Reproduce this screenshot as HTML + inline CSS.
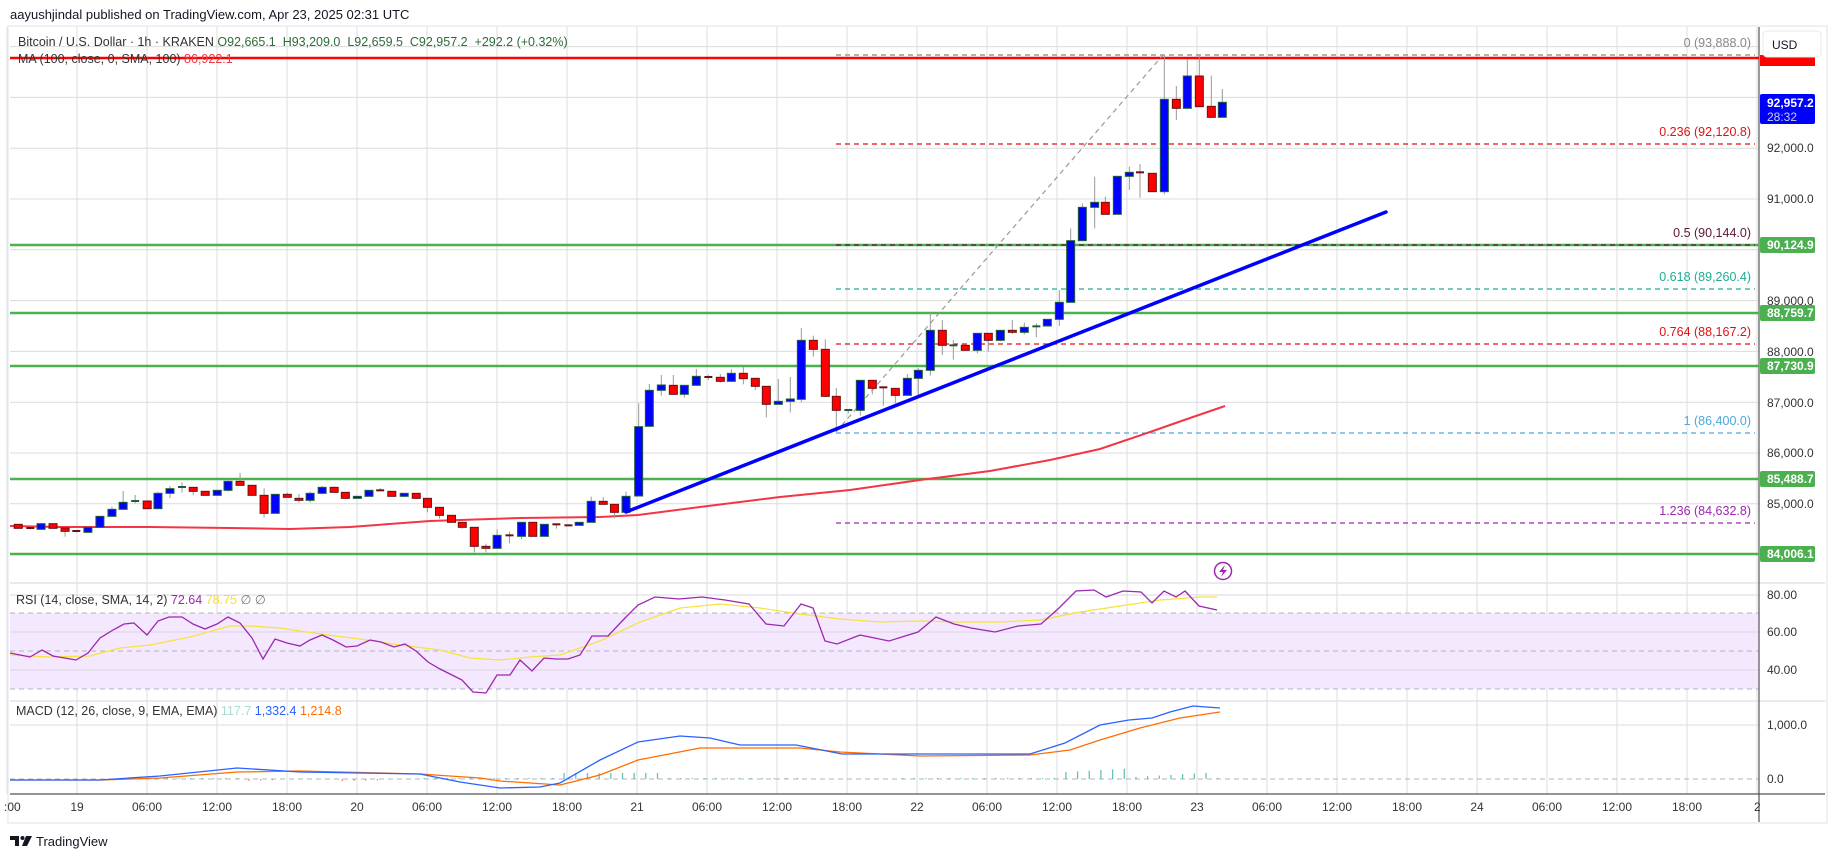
<!DOCTYPE html>
<html><head><meta charset="utf-8"><style>
html,body{margin:0;padding:0;background:#fff;width:1835px;height:857px;overflow:hidden;font-family:"Liberation Sans",sans-serif;}
svg{position:absolute;left:0;top:0}
</style></head><body>
<svg id="s" width="1835" height="857" xmlns="http://www.w3.org/2000/svg" font-family="Liberation Sans, sans-serif"></svg>
<script>
const S=document.getElementById('s');let h='';
const L=10,R=1759,T=27,B=794;
// frame
h+=`<rect x="8" y="26" width="1819" height="797" fill="#fff" stroke="#eef0f4" stroke-width="2"/>`;
h+=`<text x="10" y="19" font-size="13" fill="#131722">aayushjindal published on TradingView.com, Apr 23, 2025 02:31 UTC</text>`;
// vertical grid
for(let x=7;x<R;x+=70){h+=`<line x1="${x}" y1="${T}" x2="${x}" y2="${B}" stroke="#dcdcdc"/>`;}
// horizontal grid main
const yp=p=>453-(p-86000)*0.0508;
for(let p=84000;p<=94000;p+=1000){const y=yp(p);if(y>T&&y<583)h+=`<line x1="${L}" y1="${y}" x2="${R}" y2="${y}" stroke="#dcdcdc"/>`;}
// pane separators
h+=`<line x1="${L}" y1="583" x2="1825" y2="583" stroke="#e0e3eb" stroke-width="1.5"/>`;
h+=`<line x1="${L}" y1="701" x2="1825" y2="701" stroke="#e0e3eb" stroke-width="1.5"/>`;
// RSI pane
h+=`<rect x="${L}" y="613" width="${R-L}" height="76" fill="#f3e8fd"/>`;
[595,632,670].forEach(y=>h+=`<line x1="${L}" y1="${y}" x2="${R}" y2="${y}" stroke="#dcd4e4"/>`);
[613,651,689].forEach(y=>h+=`<line x1="${L}" y1="${y}" x2="${R}" y2="${y}" stroke="#b2b5be" stroke-dasharray="5,4"/>`);
// MACD pane
h+=`<line x1="${L}" y1="725" x2="${R}" y2="725" stroke="#dcdcdc"/>`;
h+=`<line x1="${L}" y1="779" x2="${R}" y2="779" stroke="#b2b5be" stroke-dasharray="5,4"/>`;
// axes
h+=`<line x1="${R}" y1="${T}" x2="${R}" y2="822" stroke="#555" stroke-width="1.2"/>`;
h+=`<line x1="${L}" y1="${B}" x2="1825" y2="${B}" stroke="#555" stroke-width="1.2"/>`;
// green lines
[[245,'90,124.9'],[313,'88,759.7'],[366,'87,730.9'],[479,'85,488.7'],[554,'84,006.1']].forEach(a=>{h+=`<line x1="${L}" y1="${a[0]}" x2="${R}" y2="${a[0]}" stroke="#4caf50" stroke-width="2.5"/>`;});
// red line
h+=`<line x1="${L}" y1="58" x2="${R}" y2="58" stroke="#ff0000" stroke-width="2.5"/>`;
// fib levels
const fib=[[55,'#888','0 (93,888.0)'],[144,'#e01010','0.236 (92,120.8)'],[245,'#5d1638','0.5 (90,144.0)'],[289,'#22ab94','0.618 (89,260.4)'],[344,'#e01010','0.764 (88,167.2)'],[433,'#4ea7dc','1 (86,400.0)'],[523,'#9c27b0','1.236 (84,632.8)']];
fib.forEach(f=>{h+=`<line x1="836" y1="${f[0]}" x2="1755" y2="${f[0]}" stroke="${f[1]}" stroke-width="1.2" stroke-dasharray="5,4"/>`;h+=`<text x="1751" y="${f[0]-8}" font-size="12.5" fill="${f[1]}" text-anchor="end">${f[2]}</text>`;});
h+=`<line x1="836" y1="432" x2="1163" y2="55" stroke="#999" stroke-width="1.2" stroke-dasharray="5,4"/>`;
// MA
h+=`<polyline fill="none" stroke="#f23645" stroke-width="2" points="10,526 60,527 150,527 230,528 290,529 350,527 430,521 520,518 600,517 638,515 700,507 780,497 850,490 920,480 990,471 1050,460 1100,449 1150,432 1190,418 1225,406"/>`;
// candles
let C=[];
const z6=[[44,283,295,'r'],[73,294,298,'r'],[99,281,298,'b'],[128,281,295,'r'],[157,294,304,'r',294,320],[184,303,307,'r'],[212,292,307,'b'],[241,259,292,'b'],[270,238,259,'b',230,259],[297,217,238,'b',183,238],[326,213,217,'g',195,220],[355,213,236,'r'],[381,190,236,'b',185,236],[410,176,190,'b',168,204],[439,171,173,'g',157,188],[466,172,184,'r',172,196],[495,184,196,'r'],[524,181,196,'b'],[550,154,181,'b',152,185],[579,154,166,'r',129,166],[608,166,196,'r'],[637,196,250,'r',175,263],[664,193,250,'b'],[693,193,202,'r',188,202],[721,205,211,'r',192,218],[748,190,211,'b',185,218],[777,172,190,'b',168,193],[806,172,187,'r'],[833,187,205,'r'],[862,199,205,'b'],[890,181,199,'b'],[917,181,184,'r',174,184],[945,184,199,'r'],[975,190,199,'b',190,202],[1004,190,205,'r'],[1031,205,232,'r',205,247],[1060,232,256,'r',232,266],[1089,256,277,'r'],[1115,277,292,'r',277,296],[1144,292,349,'r',292,367],[1172,349,355,'r',341,367],[1199,316,355,'b',298,355],[1229,316,316,'r',305,340],[1258,277,319,'b',277,327],[1285,277,319,'r'],[1313,283,319,'b'],[1342,283,286,'r',280,296],[1371,286,286,'r'],[1397,277,286,'b'],[1426,214,277,'b',200,277],[1455,214,223,'r',201,223],[1482,223,247,'r',223,265],[1510,199,247,'b',185,247]];
z6.forEach(c=>C.push([c[0]/2.412,430+c[1]/3,430+c[2]/3,c[3],430+(c[4]??c[1])/3,430+(c[5]??c[2])/3]));
const z7=[[116,380,588,'b',310,588],[148,271,379,'b',252,379],[184,255,271,'b',225,287],[220,256,283,'r',225,283],[253,256,283,'b',256,293],[289,229,256,'b',207,256],[325,231,231,'r',224,240],[361,232,244,'r',222,248],[394,220,244,'b',207,244],[430,220,236,'r',200,253],[466,235,259,'r',235,270],[499,259,313,'r',259,352],[535,304,313,'b',237,313],[571,297,304,'b',231,337],[604,121,298,'b',84,307],[640,121,148,'r',107,170],[676,148,289,'r',118,292],[709,289,331,'r',264,395],[745,330,330,'g',330,340],[781,241,331,'b',241,347],[817,241,265,'r',241,283],[850,262,262,'r',262,317],[886,265,286,'r',265,310],[922,235,286,'b',222,286],[955,211,235,'b',205,290],[991,91,211,'b',37,227],[1027,91,136,'r',60,165],[1060,136,136,'g',120,179],[1096,136,151,'r',136,151],[1132,100,151,'b',100,160],[1165,100,121,'r',100,155],[1201,91,121,'b',91,124],[1237,91,97,'r',60,102],[1273,82,97,'b',68,103],[1309,79,79,'g',70,112]];
z7.forEach(c=>C.push([600+c[0]/3,300+c[1]/3,300+c[2]/3,c[3],300+c[4]/3,300+c[5]/3]));
const z8=[[142,838,858,'b'],[178,787,838,'b',750,858],[212,602,787,'b',565,787],[247,502,602,'b',490,602],[284,487,502,'b',410,565],[316,487,523,'r',470,523],[352,409,523,'b'],[388,397,409,'b',380,450],[420,397,397,'r',372,473],[457,400,455,'r'],[493,178,455,'b',45,463],[529,178,205,'r',138,240],[562,108,205,'b',57,205],[598,108,200,'r',45,200],[634,199,232,'r',107,232],[667,187,232,'b',147,232]];
z8.forEach(c=>C.push([1000+c[0]/3,40+c[1]/3,40+c[2]/3,c[3],40+(c[4]??c[1])/3,40+(c[5]??c[2])/3]));
C.forEach(c=>{const [x,t,b,col,wt,wb]=c;
 h+=`<line x1="${x}" y1="${wt}" x2="${x}" y2="${wb}" stroke="#9a9a9a" stroke-width="1"/>`;
 let fill=col=='b'?'#0000ff':col=='r'?'#ff0000':'#1e5e3a';let st=col=='r'?'#6b1111':'#1e5e3a';
 if(b-t<1.5){h+=`<rect x="${x-4}" y="${t-1}" width="8" height="2" fill="${col=='g'?'#1e5e3a':'#6b1111'}"/>`;}
 else h+=`<rect x="${x-4}" y="${t}" width="8" height="${b-t}" fill="${fill}" stroke="${st}" stroke-width="1"/>`;});
// trendline
h+=`<line x1="626" y1="512" x2="1386" y2="212" stroke="#0000ff" stroke-width="3.5" stroke-linecap="round"/>`;
// legend
h+=`<text x="18" y="46" font-size="12.5" fill="#333">Bitcoin / U.S. Dollar · 1h · KRAKEN <tspan fill="#2e6b3a">O92,665.1 &#160;H93,209.0 &#160;L92,659.5 &#160;C92,957.2 &#160;+292.2 (+0.32%)</tspan></text>`;
h+=`<text x="18" y="63" font-size="12.5" fill="#333">MA (100, close, 0, SMA, 100) <tspan fill="#f23645">86,922.1</tspan></text>`;
// price axis labels
[[148,'92,000.0'],[199,'91,000.0'],[301,'89,000.0'],[352,'88,000.0'],[403,'87,000.0'],[453,'86,000.0'],[504,'85,000.0']].forEach(a=>h+=`<text x="1767" y="${a[0]+4}" font-size="12" fill="#333">${a[1]}</text>`);
[[245,'90,124.9'],[313,'88,759.7'],[366,'87,730.9'],[479,'85,488.7'],[554,'84,006.1']].forEach(a=>{h+=`<rect x="1760" y="${a[0]-8}" width="55" height="16" rx="2" fill="#4caf50"/><text x="1767" y="${a[0]+4}" font-size="12" font-weight="bold" fill="#fff">${a[1]}</text>`;});
h+=`<rect x="1760" y="55" width="55" height="11" fill="#ff0000"/>`;
h+=`<rect x="1763" y="31" width="58" height="26" rx="4" fill="#fff" stroke="#e8e8e8"/><text x="1772" y="49" font-size="12" fill="#131722">USD</text>`;
h+=`<rect x="1760" y="94" width="55" height="30" rx="2" fill="#0000ff"/><text x="1767" y="107" font-size="12" font-weight="bold" fill="#fff">92,957.2</text><text x="1767" y="121" font-size="12" fill="#ccd">28:32</text>`;
// RSI / MACD axis
[[595,'80.00'],[632,'60.00'],[670,'40.00'],[725,'1,000.0'],[779,'0.0']].forEach(a=>h+=`<text x="1767" y="${a[0]+4}" font-size="12" fill="#333">${a[1]}</text>`);
// time labels
const tl=['19','06:00','12:00','18:00','20','06:00','12:00','18:00','21','06:00','12:00','18:00','22','06:00','12:00','18:00','23','06:00','12:00','18:00','24','06:00','12:00','18:00'];
h+=`<text x="4" y="811" font-size="12" fill="#333">:00</text>`;
tl.forEach((t,i)=>{h+=`<text x="${77+70*i}" y="811" font-size="12" fill="#333" text-anchor="middle" ${t.length==2?'font-weight="normal"':''}>${t}</text>`;});
h+=`<text x="1754" y="811" font-size="12" fill="#333">2</text>`;
// RSI
h+=`<text x="16" y="604" font-size="12.5" fill="#333">RSI (14, close, SMA, 14, 2) <tspan fill="#9c27b0">72.64</tspan> <tspan fill="#f5e020">78.75</tspan> <tspan fill="#777">∅ ∅</tspan></text>`;
h+=`<polyline fill="none" stroke="#f7e33a" stroke-width="1.2" points="10,655 50,657 90,656 120,648 150,645 190,637 230,626 250,626 280,628 320,634 360,639 400,645 440,650 470,658 500,660 530,657 560,655 600,641 640,622 680,608 720,604 760,608 800,614 840,619 880,622 920,621 960,622 1000,622 1040,620 1080,612 1120,606 1160,600 1200,597 1217,597"/>`;
h+=`<polyline fill="none" stroke="#9c27b0" stroke-width="1.3" points="10,653 30,657 42,650 53,656 76,660 88,653 100,638 113,630 124,624 134,623 147,635 158,621 169,617 182,617 193,624 205,629 217,624 228,617 240,623 252,638 263,659 275,639 287,643 300,646 310,640 322,635 333,640 346,647 357,646 370,640 381,642 394,647 405,644 416,651 428,662 440,669 450,674 462,680 473,692 486,693 497,675 510,675 520,660 532,671 544,658 556,659 568,659 580,655 592,636 608,636 625,618 638,605 655,597 679,599 702,597 725,600 749,604 766,624 784,626 801,604 813,608 825,641 837,644 860,635 889,641 918,632 936,617 954,624 971,628 995,632 1018,626 1041,624 1059,608 1076,591 1094,590 1106,597 1123,591 1141,592 1152,603 1164,591 1176,597 1185,591 1199,606 1217,610"/>`;
// MACD
h+=`<text x="16" y="715" font-size="12.5" fill="#333">MACD (12, 26, close, 9, EMA, EMA) <tspan fill="#a8dcd6">117.7</tspan> <tspan fill="#2962ff">1,332.4</tspan> <tspan fill="#ff6d00">1,214.8</tspan></text>`;
for(let x=120;x<1220;x+=11.67){let v=0;if(x>560&&x<660)v=-6;else if(x>1060&&x<1210)v=-((x*7)%9)-2;else if(x>240&&x<420)v=(x%3)-0.5; else v=-1;
 const col=v<0?(x>1060||x>560&&x<700?'#26a69a':'#ef5350'):'#26a69a';
 if(x>800&&x<900)continue; if(Math.abs(v)>=1)h+=`<rect x="${x}" y="${Math.min(779,779+v)}" width="1.3" height="${Math.abs(v)}" fill="${v<0?'#26a69a':'#ef5350'}" opacity=".7"/>`;}
h+=`<polyline fill="none" stroke="#ff6d00" stroke-width="1.3" points="10,780 100,780 160,778 237,772 300,771 420,774 480,778 500,781 560,785 600,775 638,760 700,748 800,748 840,752 920,756 1030,755 1070,750 1100,740 1140,728 1180,718 1220,712"/>`;
h+=`<polyline fill="none" stroke="#2962ff" stroke-width="1.3" points="10,780 100,780 160,776 237,768 300,772 420,774 460,782 500,788 540,787 560,783 600,760 638,742 680,736 710,738 740,745 796,745 842,754 924,754 1030,754 1065,743 1100,725 1129,720 1152,718 1170,712 1193,706 1220,708"/>`;
// lightning icon
h+=`<circle cx="1223" cy="571" r="8.5" fill="#fff" stroke="#9c27b0" stroke-width="1.5"/><path d="M1225 565 L1219 572 L1223 572 L1221 577 L1227 570 L1223 570 Z" fill="#9c27b0"/>`;
// logo
h+=`<path d="M10 836 h9 v10 h-4 v-6 h-5z" fill="#131722"/><circle cx="22.5" cy="838" r="2" fill="#131722"/><path d="M26 836 h6 l-5 10 h-5z" fill="#131722"/>`;
h+=`<text x="36" y="846" font-size="13" fill="#131722">TradingView</text>`;
S.innerHTML=h;
</script>
</body></html>
